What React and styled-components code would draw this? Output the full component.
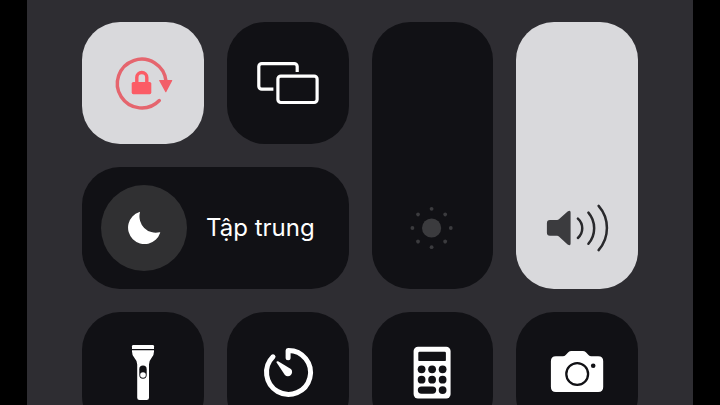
import React, { useState } from 'react';
import styled, { createGlobalStyle, css } from 'styled-components';

const GlobalStyle = createGlobalStyle`
  body {
    margin: 0;
    background: #000;
    font-family: Inter, "Noto Sans", sans-serif;
  }
`;

const Screen = styled.main`
  box-sizing: border-box;
  height: 100vh;
  margin: 0 27px;
  padding: 22px 55px 0;
  overflow: hidden;
  background: #2e2d32;
`;

const Controls = styled.div`
  display: grid;
  grid-template-columns: repeat(4, 1fr);
  grid-auto-rows: 122px;
  gap: 23px;
`;

const tile = css`
  box-sizing: border-box;
  margin: 0;
  padding: 0;
  overflow: hidden;
  border: 0;
  border-radius: 38px;
`;

const Tile = styled.button`
  ${tile}
  display: flex;
  align-items: center;
  justify-content: center;
  background: ${({ $active }) => ($active ? '#d9d9dc' : '#111115')};
  color: ${({ $active }) => ($active ? '#fb5c66' : '#fff')};
  cursor: pointer;
`;

const FocusTile = styled(Tile)`
  grid-column: span 2;
  justify-content: flex-start;
  padding: 0 19px;
  gap: 19px;
  font-size: 24px;
  font-family: inherit;
  line-height: 30px;
`;

const FocusBadge = styled.span`
  display: flex;
  align-items: center;
  justify-content: center;
  width: 86px;
  height: 86px;
  border-radius: 50%;
  background: #303032;
`;

const SliderTile = styled.label`
  ${tile}
  position: relative;
  display: grid;
  grid-row: 1 / span 2;
  grid-column: ${({ $column }) => $column};
`;

const SliderInput = styled.input`
  width: 100%;
  height: 100%;
  margin: 0;
  background: linear-gradient(to top, #d9d9dc var(--level), #111115 var(--level));
  appearance: none;
  writing-mode: vertical-lr;
  direction: rtl;
  cursor: pointer;

  &::-webkit-slider-thumb {
    width: 100%;
    height: 1px;
    background: transparent;
    appearance: none;
  }
`;

const SliderIcon = styled.span`
  position: absolute;
  right: 0;
  bottom: 29px;
  left: 0;
  display: flex;
  justify-content: center;
  color: #3b3b3e;
  pointer-events: none;
`;

const Icon = styled.svg.attrs({ 'aria-hidden': true })`
  display: block;
  flex: none;
  width: ${({ $size = 64 }) => $size}px;
  height: ${({ $size = 64 }) => $size}px;
  fill: currentColor;
`;

const SUN_DOTS = [0, 45, 90, 135, 180, 225, 270, 315];
const KEY_COLUMNS = [21.6, 32.1, 42.6];

function RotationLockIcon() {
  return (
    <Icon viewBox="0 0 64 64">
      <path
        d="M48.3 49.5A24.4 24.4 0 1 1 55 30"
        fill="none"
        stroke="#e5656e"
        strokeWidth="3.4"
        strokeLinecap="round"
      />
      <path d="M48.6 29h12.2q.8 0 .4.8l-5.8 11q-.6 1-1.2 0l-6-11q-.4-.8.4-.8z" fill="#f25f69" />
      <rect x="20.7" y="31" width="19.6" height="12.2" rx="1.6" />
      <path d="M25.8 32v-5.5a5 5 0 0 1 10 0V32" fill="none" stroke="currentColor" strokeWidth="3.4" />
    </Icon>
  );
}

function MirroringIcon() {
  return (
    <Icon viewBox="0 0 64 64">
      <g fill="none" stroke="currentColor" strokeWidth="3.2">
        <path d="M17.4 38.2H5.8a3 3 0 0 1-3-3V15.6a3 3 0 0 1 3-3h32.4a3 3 0 0 1 3 3V21" />
        <rect x="21.9" y="25.1" width="39.2" height="26.4" rx="3" />
      </g>
    </Icon>
  );
}

function MoonIcon() {
  return (
    <Icon viewBox="0 0 36 36" $size={36}>
      <path d="M13.4 1.9q.7-.2.5.6A16.3 16.3 0 0 0 33.6 22.2q.9-.2.6.6A16.5 16.5 0 1 1 13.4 1.9z" />
    </Icon>
  );
}

function SunIcon() {
  return (
    <Icon viewBox="0 0 64 64">
      <circle cx="31.6" cy="32" r="9.6" />
      {SUN_DOTS.map((angle) => (
        <circle
          key={angle}
          cx="31.6"
          cy="12.8"
          r="1.9"
          transform={`rotate(${angle} 31.6 32)`}
        />
      ))}
    </Icon>
  );
}

function SpeakerIcon() {
  return (
    <Icon viewBox="0 0 64 64">
      <path d="M4.9 24h7.2q1 0 1.8-.8l8.7-7.7q3-2 3 1v31q0 3-3 1l-8.7-8q-.8-.8-1.8-.8H4.9q-3 0-3-3V27q0-3 3-3z" />
      <g fill="none" stroke="#29292c" strokeWidth="2.5" strokeLinecap="round">
        <path d="M32.9 22.6a13 13 0 0 1 0 19.4" />
        <path d="M43.4 16.6a24 24 0 0 1 0 31.2" />
        <path d="M53.6 9.9a33.5 33.5 0 0 1 0 44.2" />
      </g>
    </Icon>
  );
}

function FlashlightIcon() {
  return (
    <Icon viewBox="0 0 64 64">
      <path d="M22.2 4h19.6q1.2 0 1.2 1.2v2.7H21V5.2Q21 4 22.2 4z" />
      <path d="M21 9.3h22v1.2q0 3.2-2 5.8-3 3.6-3 7.2v33.2q0 2.3-2.3 2.3h-7.2q-2.3 0-2.3-2.3V23.5q0-3.6-3.2-7.2-2-2.6-2-5.8z" />
      <rect x="28.3" y="24.6" width="7.4" height="13.2" rx="3.7" fill="#111115" />
      <circle cx="32" cy="34" r="2.8" />
    </Icon>
  );
}

function TimerIcon() {
  return (
    <Icon viewBox="0 0 64 64">
      <path
        d="M32.1 16.8V9.4A22 22 0 1 1 17 15.8"
        fill="none"
        stroke="currentColor"
        strokeWidth="5"
        strokeLinecap="round"
        strokeLinejoin="round"
      />
      <path d="M22.1 20.2l12.8 7.9a4.2 4.2 0 1 1-6 5.9L20.6 21.6q-.4-1.8 1.5-1.4z" />
    </Icon>
  );
}

function CalculatorIcon() {
  return (
    <Icon viewBox="0 0 64 64">
      <rect x="13.6" y="5.7" width="37" height="51.8" rx="4.4" />
      <g fill="#111115">
        <rect x="18.3" y="10.7" width="27.6" height="9.4" rx="1.2" />
        {KEY_COLUMNS.map((x) => (
          <React.Fragment key={x}>
            <circle cx={x} cy="28.3" r="3.9" />
            <circle cx={x} cy="38.7" r="3.9" />
          </React.Fragment>
        ))}
        <rect x="17.8" y="45.4" width="18.4" height="7.4" rx="3.7" />
        <circle cx="42.6" cy="49.1" r="3.9" />
      </g>
    </Icon>
  );
}

function CameraIcon() {
  return (
    <Icon viewBox="0 0 64 64">
      <path d="M10.9 15.3h7q1.6 0 2.8-1.2l2.6-2.8Q24.6 10 26.4 10h11.4q1.8 0 3.1 1.3l2.6 2.8q1.2 1.2 2.8 1.2h6.9q5 0 5 5V46q0 5-5 5H10.9q-5 0-5-5V20.3q0-5 5-5z" />
      <circle cx="32.2" cy="33" r="10.9" fill="none" stroke="#111115" strokeWidth="2.3" />
      <circle cx="48.2" cy="24.7" r="2.3" fill="#111115" />
    </Icon>
  );
}

function Slider({ label, column, initialValue, children }) {
  const [value, setValue] = useState(initialValue);

  return (
    <SliderTile $column={column}>
      <SliderInput
        type="range"
        min="0"
        max="100"
        aria-label={label}
        value={value}
        onChange={(event) => setValue(Number(event.target.value))}
        style={{ '--level': `${value}%` }}
      />
      <SliderIcon>{children}</SliderIcon>
    </SliderTile>
  );
}

function App() {
  const [locked, setLocked] = useState(true);

  return (
    <>
      <GlobalStyle />
      <Screen>
        <Controls>
          <Tile
            type="button"
            aria-label="Khóa hướng dọc"
            aria-pressed={locked}
            $active={locked}
            onClick={() => setLocked(!locked)}
          >
            <RotationLockIcon />
          </Tile>
          <Tile type="button" aria-label="Phản chiếu màn hình">
            <MirroringIcon />
          </Tile>
          <Slider label="Độ sáng" column={3} initialValue={0}>
            <SunIcon />
          </Slider>
          <Slider label="Âm lượng" column={4} initialValue={100}>
            <SpeakerIcon />
          </Slider>
          <FocusTile type="button">
            <FocusBadge>
              <MoonIcon />
            </FocusBadge>
            Tập trung
          </FocusTile>
          <Tile type="button" aria-label="Đèn pin">
            <FlashlightIcon />
          </Tile>
          <Tile type="button" aria-label="Hẹn giờ">
            <TimerIcon />
          </Tile>
          <Tile type="button" aria-label="Máy tính">
            <CalculatorIcon />
          </Tile>
          <Tile type="button" aria-label="Camera">
            <CameraIcon />
          </Tile>
        </Controls>
      </Screen>
    </>
  );
}

export default App;
